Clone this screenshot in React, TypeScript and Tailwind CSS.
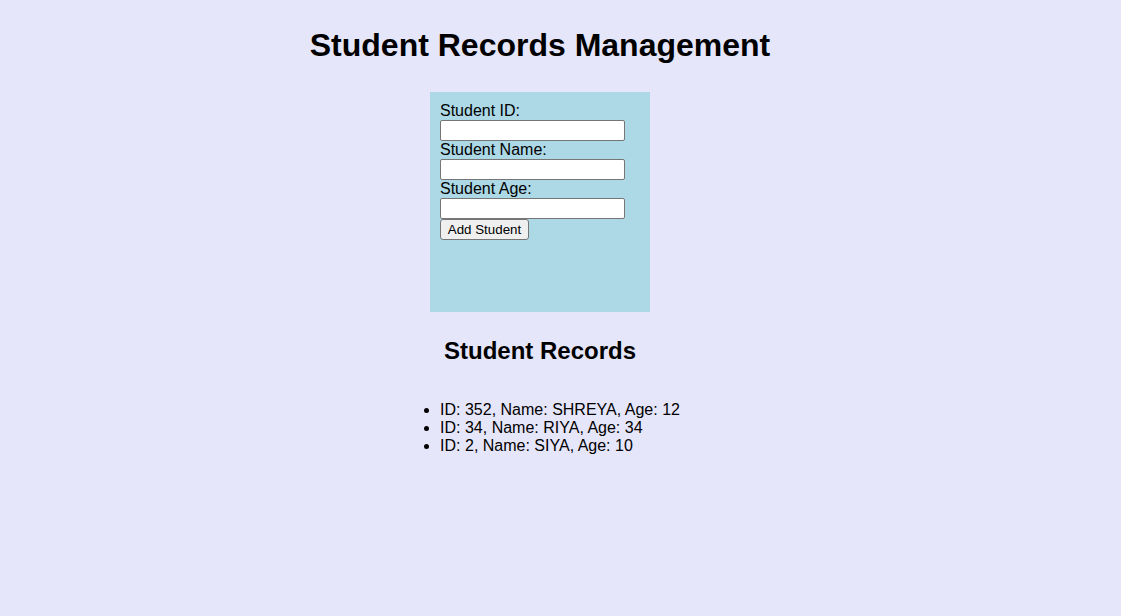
import React, { useState } from 'react';

type Student = { id: string; name: string; age: string };

const initialStudents: Student[] = [
  { id: '352', name: 'SHREYA', age: '12' },
  { id: '34', name: 'RIYA', age: '34' },
  { id: '2', name: 'SIYA', age: '10' },
];

export default function App() {
  const [students, setStudents] = useState(initialStudents);
  const [id, setId] = useState('');
  const [name, setName] = useState('');
  const [age, setAge] = useState('');

  const addStudent = (e: React.FormEvent) => {
    e.preventDefault();
    if (!id || !name || !age) return;
    setStudents([...students, { id, name, age }]);
    setId('');
    setName('');
    setAge('');
  };

  const inputClass =
    'block w-[185px] h-[21px] bg-white border border-[#767676] rounded-[2px] px-[2px] text-[13.33px] outline-none';

  return (
    <div className="min-h-screen bg-[#e6e6fa] text-black font-['Liberation_Sans',Arial,sans-serif]">
      <div className="w-[1080px] flex flex-col items-center">
        <h1 className="mt-[27px] text-[32px] leading-[37px] font-bold">Student Records Management</h1>

        {/* form */}
        <form
          onSubmit={addStudent}
          className="mt-[28px] w-[220px] h-[220px] bg-[#add8e6] pt-[10px] px-[10px] flex flex-col items-start"
        >
          <label className="text-[16px] leading-[18px]">Student ID:</label>
          <input className={inputClass} value={id} onChange={(e) => setId(e.target.value)} />
          <label className="text-[16px] leading-[18px]">Student Name:</label>
          <input className={inputClass} value={name} onChange={(e) => setName(e.target.value)} />
          <label className="text-[16px] leading-[18px]">Student Age:</label>
          <input className={inputClass} value={age} onChange={(e) => setAge(e.target.value)} />
          <button
            type="submit"
            className="w-[89px] h-[21px] bg-[#efefef] border border-[#767676] rounded-[3px] text-[13.33px] leading-[15px]"
          >
            Add Student
          </button>
        </form>

        <h2 className="mt-[25px] text-[24px] leading-[28px] font-bold">Student Records</h2>

        {/* list */}
        <ul className="mt-[36px] list-disc pl-[40px] text-[16px] leading-[18px]">
          {students.map((s) => (
            <li key={s.id}>
              ID: {s.id}, Name: {s.name}, Age: {s.age}
            </li>
          ))}
        </ul>
      </div>
    </div>
  );
}
